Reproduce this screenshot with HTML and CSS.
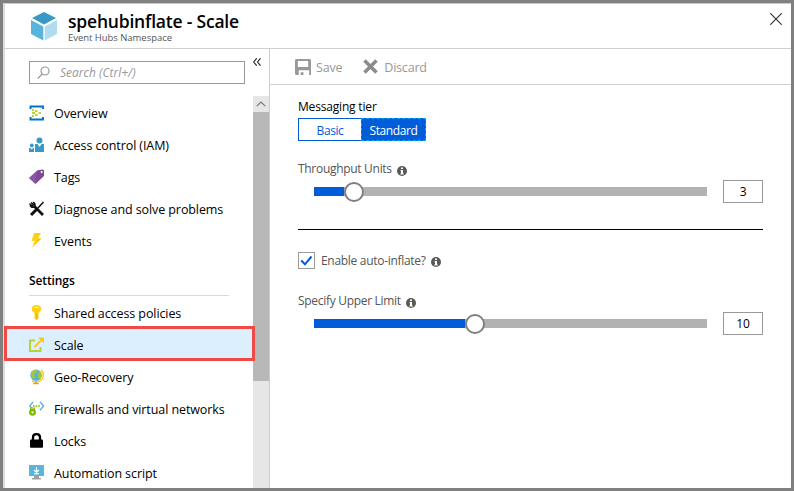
FILE: index.html
```html
<!DOCTYPE html>
<html lang="en">
<head>
<meta charset="utf-8">
<title>spehubinflate - Scale</title>
<link rel="stylesheet" href="styles.css">
</head>
<body>
<div class="blade">
  <header class="header">
    <svg class="logo" width="26" height="29" viewBox="0 0 26 29"><path fill="#3999c6" d="M13 0 25 6 13 12.500 1 6z"/><path fill="#59b4d9" d="M0 8 12.300 14.500V28.500L0 22z"/><path fill="#b0dcef" d="M26 8 13.700 14.500V28.500L26 22z"/></svg>
    <div class="heading"><h1>spehubinflate - Scale</h1><p>Event Hubs Namespace</p></div>
    <svg class="close" width="12" height="12" viewBox="0 0 12 12"><path d="M.3.3l11.400 11.400M11.700.3.3 11.700" stroke="#333" stroke-width="1.200"/></svg>
  </header>
  <div class="columns">
    <aside class="sidebar">
      <div class="search-row">
        <div class="search"><svg width="14" height="14" viewBox="0 0 14 14" fill="none" stroke="#999" stroke-width="1.200"><circle cx="8" cy="5" r="4"/><path d="M5.200 8 .8 12.500"/></svg><span>Search (Ctrl+/)</span></div>
        <svg class="collapse" width="8" height="8" viewBox="0 0 8 8" fill="none" stroke="#222" stroke-width="1.100"><path d="M3.700.3.7 4l3 3.700M7.500.3l-3 3.700 3 3.700"/></svg>
      </div>
      <div class="nav-area">
        <nav class="menu">
          <a class="item"><svg width="16" height="16" viewBox="0 0 16 16"><path d="M1.500 4V1.500h12.500V4M1.500 12v2.500h12.500V12" fill="none" stroke="#0072c6" stroke-width="1.900"/><path fill="#b8d432" d="M3 4h2v2H3zm0 3h3v2H3zm0 3h2v2H3zm3-5h2.500v2H6zm0 4h2.500v2H6zm3.500-2H12v2H9.500z"/></svg><span>Overview</span></a>
          <a class="item"><svg width="16" height="16" viewBox="0 0 16 16" fill="#3999c6"><circle cx="10.500" cy="3.500" r="3"/><path d="M6 7h2.500l2 3 2-3H15v8H6z"/><circle cx="2.800" cy="8.500" r="1.900"/><path d="M0 11h1.500l1.300 1.500L4 11h1v4H0z"/></svg><span>Access control (IAM)</span></a>
          <a class="item"><svg width="16" height="16" viewBox="0 0 16 16"><path fill="#804998" fill-rule="evenodd" d="M0 9 8.500 1.300 14 .5l1 1V7L6.500 15zM12.600 2a1 1 0 1 0 .1 0z"/><path fill="#9461a9" d="M0 9 8.500 1.300 5.800 14.500z" opacity=".6"/></svg><span>Tags</span></a>
          <a class="item"><svg width="16" height="16" viewBox="0 0 16 16" fill="none" stroke="#111"><path d="M5 5l9 9" stroke-width="2.600"/><path d="M2 1.500l2.500 2.200L3.500 5 1.200 3.500c0 2 1.500 3.500 3.800 2.500 1.700-1.500 1.300-4-1-4.800" stroke-width="1.500"/><path d="M14.500 1 8 8" stroke-width="1.500"/><path d="M7.500 8.500 2 14" stroke-width="3"/></svg><span>Diagnose and solve problems</span></a>
          <a class="item"><svg width="16" height="16" viewBox="0 0 16 16"><path fill="#fcd116" d="M5 0h7L9 5.500h3.500L3 14.500 6 8H2.500z"/><path fill="#ffb900" d="M9 5.500h3.500L3 14.500 8.500 7z" opacity=".7"/></svg><span>Events</span></a>
          <h2>Settings</h2>
          <a class="item"><svg width="16" height="16" viewBox="0 0 16 16"><path fill="#fcd116" fill-rule="evenodd" d="M7.500 0c6 0 6 6 2 8v5.500l-2 2-2-2V8C1.500 6 1.500 0 7.500 0zM5.700 2v1h3.600V2z"/><path d="M7.700 8v6" stroke="#e8a900"/></svg><span>Shared access policies</span></a>
          <a class="item selected"><svg width="16" height="16" viewBox="0 0 16 16" fill="none"><path d="M6 3.500H1V14h10.500V10" stroke="#b8d432" stroke-width="2"/><path d="M5.500 10 12.500 3" stroke="#fcc916" stroke-width="2"/><path fill="#fcc916" d="M9 .5h6V6.500z"/></svg><span>Scale</span></a>
          <a class="item"><svg width="16" height="16" viewBox="0 0 16 16"><circle cx="7" cy="6.300" r="5.700" fill="#59b4d9"/><path fill="#a5c832" d="M2 3 5 .8 8 1 7 4 5 5 6 8 4 10 2 7zM9 4l3-1 1 4-2 4-2-3z"/><path fill="none" stroke="#fcc916" stroke-width="1.400" d="M12 .8c4 4 2.500 11-3.500 12-2 .5-4 0-5.500-1"/><path fill="#eaa318" d="M6 12.500h2V14h2v1.300H4V14h2z"/></svg><span>Geo-Recovery</span></a>
          <a class="item"><svg width="16" height="16" viewBox="0 0 16 16" fill="none"><path d="M4 1 .8 5 2.500 7M11 .8 14.500 5 11 9.200" stroke="#59b4d9" stroke-width="1.400"/><path d="M4 5h1.600m1 0h1.600m1 0h1.600" stroke="#7fba00" stroke-width="1.600"/><circle cx="3.500" cy="11.300" r="2.300" stroke="#7fba00" stroke-width="2.300"/><path d="M1.700 9V7h3.500V9" stroke="#7fba00" stroke-width="1.200"/></svg><span>Firewalls and virtual networks</span></a>
          <a class="item"><svg width="16" height="16" viewBox="0 0 16 16"><path d="M4 8V4.500Q4 1.200 7.500 1.200T11 4.500V8" fill="none" stroke="#000" stroke-width="2.300"/><rect x="1" y="6.500" width="13" height="8.300" rx="1"/></svg><span>Locks</span></a>
          <a class="item"><svg width="16" height="16" viewBox="0 0 16 16"><path fill="#a0a1a2" d="M0 0h15v11H0zM5 11h5v2h2v1.500H3V13h2z"/><path fill="#59b4d9" d="M1 1h13v9H1z"/><path d="M7.500 2v5M5 5l2.500 2.300L10 5M5 8.700h5" fill="none" stroke="#fff" stroke-width="1.200"/></svg><span>Automation script</span></a>
        </nav>
        <div class="scrollbar"><div class="up"><svg width="10" height="6" viewBox="0 0 10 6"><path d="M.8 5.200 5 1l4.200 4.200" fill="none" stroke="#777" stroke-width="1.200"/></svg></div><div class="thumb"></div></div>
      </div>
    </aside>
    <main class="main">
      <div class="toolbar">
        <button class="save"><svg width="16" height="16" viewBox="0 0 17 17"><path fill="#999" fill-rule="evenodd" d="M1 0h15l1 1v16h-2v-5H4v5H1l-1-1V1zM3 2v6.500h11V2zM6 14h3v3H6z"/></svg><span>Save</span></button>
        <button class="discard"><svg width="15" height="15" viewBox="0 0 15 15"><path d="M1.500 1.500 13.500 13.500M13.500 1.500 1.500 13.500" stroke="#8c8c8c" stroke-width="3.600"/></svg><span>Discard</span></button>
      </div>
      <section class="form">
        <div class="tier-label">Messaging tier</div>
        <div class="segments"><span class="basic">Basic</span><span class="standard">Standard</span></div>
        <div class="label units"><span>Throughput Units</span><svg width="10" height="10" viewBox="0 0 10 10"><circle cx="5" cy="5" r="5" fill="#595959"/><path fill="#fff" d="M4 1.500h2v1.600H4zM3.500 4H6v3.500h.8v1H3.300v-1H4V5h-.5z"/></svg></div>
        <div class="slider-row"><div class="track"><div class="fill three"></div><div class="knob"></div></div><div class="value">3</div></div>
        <hr>
        <div class="label enable"><div class="checkbox"><svg width="13" height="11" viewBox="0 0 13 11"><path d="M1.200 5.500 5 9.300 11.500 1.500" fill="none" stroke="#015cda" stroke-width="2"/></svg></div><span>Enable auto-inflate?</span><svg width="10" height="10" viewBox="0 0 10 10"><circle cx="5" cy="5" r="5" fill="#595959"/><path fill="#fff" d="M4 1.500h2v1.600H4zM3.500 4H6v3.500h.8v1H3.300v-1H4V5h-.5z"/></svg></div>
        <div class="label limit"><span>Specify Upper Limit</span><svg width="10" height="10" viewBox="0 0 10 10"><circle cx="5" cy="5" r="5" fill="#595959"/><path fill="#fff" d="M4 1.500h2v1.600H4zM3.500 4H6v3.500h.8v1H3.300v-1H4V5h-.5z"/></svg></div>
        <div class="slider-row"><div class="track"><div class="fill ten"></div><div class="knob"></div></div><div class="value">10</div></div>
      </section>
    </main>
  </div>
</div>
</body>
</html>
```

FILE: styles.css
```css
*, *::after { box-sizing: border-box; }
body { margin: 0; font: 12.5px/16px "Open Sans", "Noto Sans", sans-serif; letter-spacing: -0.2px; color: #000; }
svg { display: block; flex: none; }
h1, h2, p { margin: 0; }
.blade { width: 794px; height: 491px; border: 3px solid #808080; background: #fff; display: flex; flex-direction: column; overflow: hidden; }
.header { height: 46px; flex: none; border-top: 1px solid #ccc; border-bottom: 1px solid #d0d0d0; border-left: 2px solid #ddd; display: flex; align-items: flex-start; padding: 8px 9px 0 26px; }
.heading { margin-left: 11px; flex: 1; }
h1 { font-size: 17.5px; line-height: 20px; font-weight: 600; letter-spacing: -0.2px; margin-top: -1px; }
.heading p { font-size: 9.5px; line-height: 12px; color: #555; margin-top: 1px; letter-spacing: -0.04px; }
.close { margin-top: 1px; }
.columns { flex: 1; display: flex; min-height: 0; }
.sidebar { width: 267px; border-left: 2px solid #ddd; border-right: 1px solid #ccc; display: flex; flex-direction: column; }
.search-row { height: 47px; flex: none; display: flex; padding: 12px 0 0 24px; }
.search { width: 216px; height: 23px; border: 1px solid #999; display: flex; align-items: center; padding-left: 7px; gap: 9px; color: #999; font-size: 12px; font-style: italic; letter-spacing: 0; }
.collapse { margin: -3px 0 0 8px; }
.nav-area { flex: 1; display: flex; min-height: 0; }
.menu { width: 248px; padding-top: 1px; letter-spacing: -0.09px; }
.item { height: 32px; display: flex; align-items: center; padding-left: 24px; gap: 9px; white-space: nowrap; }
.item span { padding-top: 2px; }
h2 { font-size: 12px; line-height: 16px; font-weight: 600; letter-spacing: -0.1px; margin: 0 24px 1px; padding: 16px 0 6px; height: 39px; border-bottom: 1px solid #d9d9d9; }
.selected { position: relative; background: #dcefff; }
.selected::after { content: ""; position: absolute; left: -1px; top: -3px; width: 251px; height: 35px; border: 3px solid #ef4b44; z-index: 2; }
.scrollbar { width: 16px; background: #e6e6e6; }
.up { height: 16px; display: flex; align-items: center; justify-content: center; }
.thumb { height: 269px; background: #b8b8b8; }
.main { flex: 1; }
.toolbar { height: 36px; border-bottom: 1px solid #d0d0d0; padding-left: 25px; display: flex; align-items: center; gap: 21px; }
button { border: 0; background: none; padding: 0; font: inherit; letter-spacing: inherit; color: #999; display: flex; align-items: center; }
button span { padding-top: 2px; }
.save { gap: 5px; }
.discard { gap: 6px; }
.form { padding: 14px 28px 0; }
.tier-label { font-size: 12px; line-height: 16px; letter-spacing: -0.18px; }
.segments { display: flex; width: 128px; height: 23px; margin-top: 3px; font-size: 12px; text-align: center; letter-spacing: -0.4px; }
.basic { width: 63px; border: 1px solid #015cda; border-right: 0; color: #015cda; }
.standard { width: 65px; background: #015cda; border: 1px dashed #00a8f0; color: #fff; }
.segments span { line-height: 23px; }
.label { display: flex; align-items: center; font-size: 12px; color: #555; height: 16px; letter-spacing: -0.3px; }
.label > svg { margin: 3px 0 0 5px; }
.units { margin-top: 20px; }
.slider-row { display: flex; align-items: center; height: 23px; padding-left: 16px; margin-top: 3px; }
.track { width: 393px; height: 9px; background: #b2b2b2; display: flex; align-items: center; }
.fill { height: 9px; background: #015cda; }
.three { width: 30px; }
.ten { width: 151px; }
.knob { width: 20px; height: 20px; flex: none; border: 2px solid #808080; border-radius: 50%; background: #fff; }
.value { width: 40px; height: 23px; border: 1px solid #999; margin-left: 16px; text-align: center; line-height: 22px; font-size: 12px; }
hr { border: 0; height: 1px; background: #000; margin: 26px 0 22px; }
.checkbox { width: 17px; height: 17px; flex: none; border: 1px solid #999; display: flex; align-items: center; justify-content: center; margin-right: 6px; }
.enable { height: 17px; }
.limit { margin-top: 24px; }
```
